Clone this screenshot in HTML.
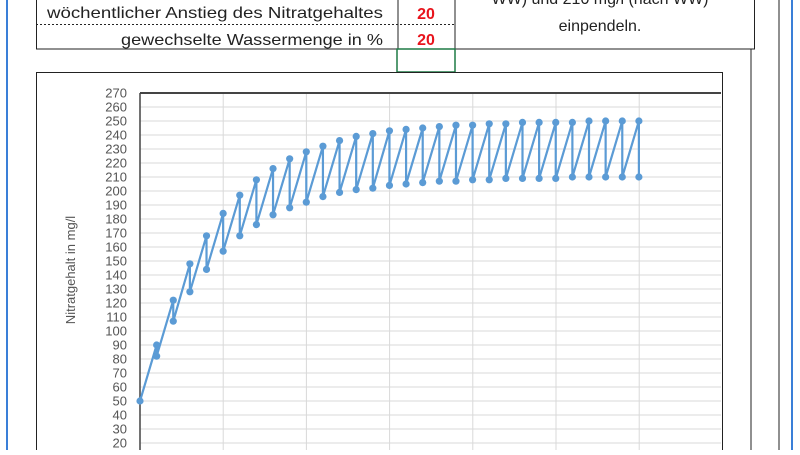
<!DOCTYPE html>
<html><head><meta charset="utf-8"><style>
body{margin:0;background:#fff;width:800px;height:450px;overflow:hidden;font-family:"Liberation Sans",sans-serif}
</style></head><body>
<svg id="s" width="800" height="450" xmlns="http://www.w3.org/2000/svg" font-family="Liberation Sans, sans-serif">
<rect width="800" height="450" fill="#fff"/>
<line x1="7" y1="0" x2="7" y2="450" stroke="#3a7fd8" stroke-width="2"/>
<line x1="792" y1="0" x2="792" y2="450" stroke="#3a7fd8" stroke-width="2"/>
<line x1="779" y1="0" x2="779" y2="450" stroke="#222" stroke-width="1"/>
<line x1="751" y1="49" x2="751" y2="450" stroke="#222" stroke-width="1"/>
<rect x="36.5" y="-2" width="718" height="51" fill="none" stroke="#222"/>
<line x1="36" y1="24.5" x2="455" y2="24.5" stroke="#222" stroke-dasharray="2,2"/>
<line x1="398" y1="0" x2="398" y2="49" stroke="#222"/>
<line x1="455" y1="0" x2="455" y2="49" stroke="#222"/>
<rect x="397" y="49" width="58" height="23" fill="none" stroke="#1e7a45" stroke-width="1.5"/>
<g font-size="16" fill="#222">
<text x="383" y="18" text-anchor="end" textLength="336" lengthAdjust="spacingAndGlyphs">wöchentlicher Anstieg des Nitratgehaltes</text>
<text x="383" y="45" text-anchor="end" textLength="262" lengthAdjust="spacingAndGlyphs">gewechselte Wassermenge in %</text>
<text x="600" y="4" text-anchor="middle">WW) und 210 mg/l (nach WW)</text>
<text x="600" y="31" text-anchor="middle">einpendeln.</text>
</g>
<g font-size="16" font-weight="bold" fill="#e8141c" text-anchor="middle">
<text x="426" y="19">20</text><text x="426" y="45">20</text>
</g>
<rect x="36.5" y="72.5" width="686" height="390" fill="none" stroke="#222"/>
<g id="grid"></g>
<line x1="140" y1="93" x2="721" y2="93" stroke="#444" stroke-width="2"/>
<line x1="140" y1="93" x2="140" y2="450" stroke="#444" stroke-width="1.5"/>
<text transform="translate(75,270) rotate(-90)" text-anchor="middle" font-size="13" fill="#555">Nitratgehalt in mg/l</text>
<g id="data"></g>
</svg>
<script>
var ns="http://www.w3.org/2000/svg",g=document.getElementById('grid'),d=document.getElementById('data');
function el(p,t,a,txt){var e=document.createElementNS(ns,t);for(var k in a)e.setAttribute(k,a[k]);if(txt)e.textContent=txt;p.appendChild(e);return e;}
function Y(v){return 93+(270-v)*1.4;}
for(var v=270;v>=20;v-=10){var y=Y(v);if(v<270)el(g,'line',{x1:140,y1:y,x2:721,y2:y,stroke:'#d9d9d9','stroke-width':1});
el(g,'text',{x:127,y:y+4.5,'text-anchor':'end','font-size':'13',fill:'#555'},String(v));}
for(var i=1;i<=6;i++){var x=140+83.2*i;el(g,'line',{x1:x,y1:93,x2:x,y2:450,stroke:'#d9d9d9'});}
var T=[90,122,148,168,184,197,208,216,223,228,232,236,239,241,243,244,245,246,247,247,248,248,249,249,249,249,250,250,250,250];
var B=[82,107,128,144,157,168,176,183,188,192,196,199,201,202,204,205,206,207,207,208,208,209,209,209,209,210,210,210,210,210];
var p="M140 "+Y(50),pts=[[140,Y(50)]];
for(var i=0;i<30;i++){var x=140+16.63*(i+1);p+=" L"+x+" "+Y(T[i])+" L"+x+" "+Y(B[i]);pts.push([x,Y(T[i])],[x,Y(B[i])]);}
el(d,'path',{d:p,fill:'none',stroke:'#5b9bd5','stroke-width':2.2});
pts.forEach(function(q){el(d,'circle',{cx:q[0],cy:q[1],r:3.6,fill:'#5b9bd5'});});
</script>
</body></html>
